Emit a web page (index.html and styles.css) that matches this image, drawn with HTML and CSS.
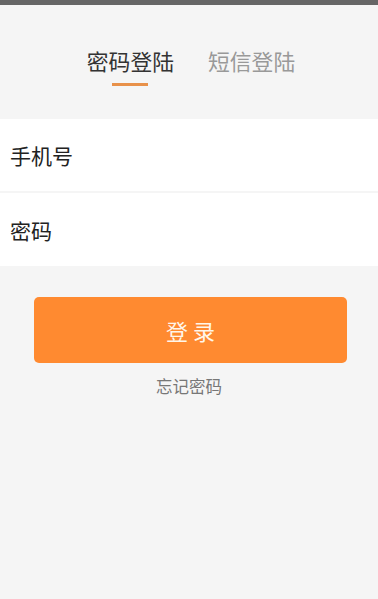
FILE: index.html
```html
<!DOCTYPE html>
<html lang="zh-CN">
<head>
    <meta charset="UTF-8">
    <title>登录</title>
    <link rel="stylesheet" href="styles.css">
</head>
<body>
<div class="status_bar"></div>
<div class="tabs">
    <div class="tab tab_active">
        <span>密码登陆</span>
        <i class="tab_line"></i>
    </div>
    <div class="tab">
        <span>短信登陆</span>
    </div>
</div>
<div class="form_box">
    <div class="form_row">
        <input class="form_input" type="text" placeholder="手机号">
    </div>
    <div class="form_row">
        <input class="form_input" type="password" placeholder="密码">
    </div>
</div>
<button class="login_btn">登 录</button>
<a class="forget_link" href="#">忘记密码</a>
</body>
</html>
```

FILE: styles.css
```css
html, body {
    margin: 0;
    padding: 0;
    height: 100%;
}

body {
    background: #f5f5f5;
    font-family: "Noto Sans CJK SC", "Noto Sans", sans-serif;
}

.status_bar {
    height: 5px;
    background: #666666;
}

.tabs {
    display: flex;
    justify-content: center;
    gap: 34px;
    padding: 41px 0 0 4px;
    height: 73px;
}

.tab {
    display: flex;
    flex-direction: column;
    align-items: center;
    font-size: 21.8px;
    line-height: 30px;
    color: #999999;
}

.tab_active {
    color: #333333;
}

.tab_line {
    display: block;
    width: 36px;
    height: 3px;
    margin-top: 7px;
    background: #e8914a;
}

.form_box {
    background: #ffffff;
}

.form_row {
    height: 72px;
    display: flex;
    align-items: center;
    border-bottom: 2px solid #f5f5f5;
}

.form_row:last-child {
    border-bottom: none;
    height: 73px;
}

.form_input {
    border: none;
    outline: none;
    background: transparent;
    width: 100%;
    margin-left: 10px;
    padding: 0;
    font-family: inherit;
    font-size: 21px;
    color: #222222;
}

.form_input::placeholder {
    color: #222222;
}

.login_btn {
    display: block;
    width: 313px;
    height: 66px;
    margin: 31px 0 0 34px;
    border: none;
    border-radius: 5px;
    background: #ff8a30;
    color: #fff6ea;
    font-family: inherit;
    font-size: 22px;
}

.forget_link {
    display: block;
    margin-top: 11px;
    text-align: center;
    font-size: 16.5px;
    color: #777777;
    text-decoration: none;
}
```
